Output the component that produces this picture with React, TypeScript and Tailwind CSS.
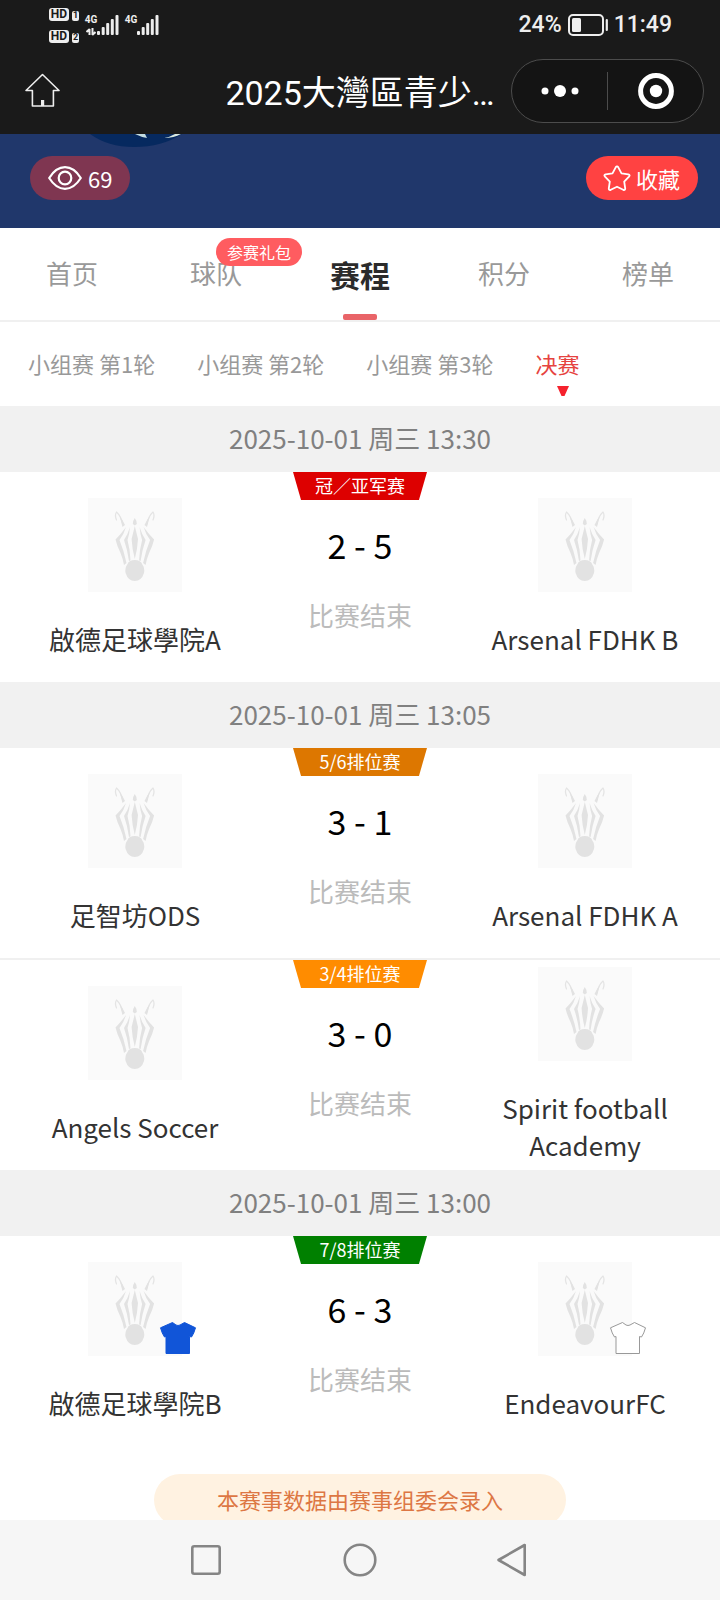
import { useState } from 'react';

type Team = { name: string; shirt?: { fill: string; stroke: string } };
type Match = {
  label: string;
  color: string;
  score: string;
  status: string;
  home: Team;
  away: Team;
};
type Day = { date: string; matches: Match[] };

const DAYS: Day[] = [
  {
    date: '2025-10-01 周三 13:30',
    matches: [
      {
        label: '冠／亚军赛',
        color: 'bg-[#dd0000]',
        score: '2 - 5',
        status: '比赛结束',
        home: { name: '啟德足球學院A' },
        away: { name: 'Arsenal FDHK B' },
      },
    ],
  },
  {
    date: '2025-10-01 周三 13:05',
    matches: [
      {
        label: '5/6排位赛',
        color: 'bg-[#dd7700]',
        score: '3 - 1',
        status: '比赛结束',
        home: { name: '足智坊ODS' },
        away: { name: 'Arsenal FDHK A' },
      },
      {
        label: '3/4排位赛',
        color: 'bg-[#ff8c00]',
        score: '3 - 0',
        status: '比赛结束',
        home: { name: 'Angels Soccer' },
        away: { name: 'Spirit football Academy' },
      },
    ],
  },
  {
    date: '2025-10-01 周三 13:00',
    matches: [
      {
        label: '7/8排位赛',
        color: 'bg-[#008000]',
        score: '6 - 3',
        status: '比赛结束',
        home: { name: '啟德足球學院B', shirt: { fill: '#1155d8', stroke: '#1155d8' } },
        away: { name: 'EndeavourFC', shirt: { fill: '#ffffff', stroke: '#999999' } },
      },
    ],
  },
];

const TABS = ['首页', '球队', '赛程', '积分', '榜单'];
const ROUNDS = ['小组赛 第1轮', '小组赛 第2轮', '小组赛 第3轮', '决赛'];

function HdMark({ sim }: { sim: string }) {
  return (
    <div className="flex items-end gap-[3px]">
      <span className="flex h-[13px] w-5 items-center justify-center rounded-[3px] bg-[#eeeeee] text-[12px] leading-none font-bold text-[#1a1a1a]">
        HD
      </span>
      <span className="flex h-2.5 w-[7px] items-center justify-center rounded-[2px] bg-[#eeeeee] text-[9px] leading-none font-bold text-[#1a1a1a]">
        {sim}
      </span>
    </div>
  );
}

function Signal({ traffic }: { traffic?: boolean }) {
  return (
    <div className="flex items-start">
      <div className="flex w-3 flex-col items-center">
        <span className="text-[10px] leading-[10px] font-bold">4G</span>
        {traffic && (
          <svg viewBox="0 0 10 8" className="mt-[3px] h-2 w-[10px]" fill="none" stroke="currentColor" strokeWidth="2">
            <path d="M3.500 7V1M3.800 1L.5 4M6.500 0v7M6.200 7l3.300-3" />
          </svg>
        )}
      </div>
      <svg viewBox="0 0 22 20" className="h-5 w-[22px]" fill="currentColor">
        <rect x="0" y="16" width="3" height="4" rx="1" />
        <rect x="4.7" y="12" width="3" height="8" rx="1" />
        <rect x="9.2" y="8" width="3" height="12" rx="1" />
        <rect x="13.8" y="4" width="3" height="16" rx="1" />
        <rect x="18.5" y="0" width="3" height="20" rx="1" />
      </svg>
    </div>
  );
}

function StatusBar() {
  return (
    <div className="flex h-12 items-center justify-between pt-0.5 pr-12 pl-[49px] text-[#eeeeee]">
      <div className="flex items-center">
        <div className="mr-1.5 flex flex-col gap-[9px]">
          <HdMark sim="1" />
          <HdMark sim="2" />
        </div>
        <div className="flex gap-1.5">
          <Signal traffic />
          <Signal />
        </div>
      </div>
      <div className="flex items-center gap-1.5 text-[23px] leading-6 font-medium">
        <span>24%</span>
        <svg viewBox="0 0 40 22" className="h-[22px] w-10" fill="none" stroke="currentColor">
          <rect x="1" y="1" width="34" height="20" rx="4" strokeWidth="2" />
          <rect x="4" y="4" width="9" height="14" rx="1.5" fill="currentColor" stroke="none" />
          <path d="M38.8 6v10" strokeWidth="2.2" strokeLinecap="round" />
        </svg>
        <span>11:49</span>
      </div>
    </div>
  );
}

function TitleBar() {
  return (
    <div className="grid h-[86px] grid-cols-[1fr_auto_1fr] items-center px-4">
      <button aria-label="主页" className="ml-2 justify-self-start">
        <svg viewBox="0 0 36 36" className="size-9" fill="none" stroke="#eeeeee" strokeWidth="1.6" strokeLinejoin="round">
          <path d="M18.500 1.500L35 17.500h-5.600v15.500H8.400v-15.500H2z" />
          <path d="M18.600 27v6" strokeWidth="3.200" />
        </svg>
      </button>
      <h1 className="pt-1 text-[34px] leading-10 text-white">2025大灣區青少…</h1>
      <div className="flex h-16 w-[193px] items-center justify-self-end rounded-full border border-[#4c4c4c] bg-[#141414]">
        <button aria-label="更多" className="flex flex-1 justify-center">
          <svg viewBox="0 0 40 14" className="h-3.5 w-10" fill="#fff">
            <circle cx="5" cy="7" r="3.5" />
            <circle cx="20" cy="7" r="6" />
            <circle cx="35" cy="7" r="3.5" />
          </svg>
        </button>
        <span className="h-[38px] w-px bg-[#4c4c4c]" />
        <button aria-label="关闭" className="flex flex-1 justify-center">
          <svg viewBox="0 0 36 36" className="size-9" fill="none">
            <circle cx="18" cy="18" r="15.4" stroke="#fff" strokeWidth="5" />
            <circle cx="18" cy="18" r="6.2" fill="#fff" />
          </svg>
        </button>
      </div>
    </div>
  );
}

function Banner() {
  return (
    <div className="relative flex h-[94px] shrink-0 items-center justify-between bg-[#20376b] pr-[22px] pb-1.5 pl-[30px] text-[22px] leading-[30px] text-white">
      <svg viewBox="0 0 96 14" className="absolute top-0 left-[88px] h-3.5 w-24">
        <path d="M2 0Q20 13 46 13Q74 13 94 0z" fill="#06295f" />
        <path d="M47 0h10l2 4q-6-1-12-4z" fill="#c4dde2" />
        <path d="M76 4Q86 4 93 0H87Q82 3 76 4z" fill="#d9e8e0" />
      </svg>
      <span className="flex h-11 w-[100px] items-center gap-1.5 rounded-full bg-[#7f3651] pb-px pl-[18px]">
        <svg viewBox="0 0 34 24" className="h-6 w-[34px]" fill="none" stroke="currentColor" strokeWidth="2.2">
          <path d="M1.200 12Q8 1.200 17 1.200T32.800 12Q26 22.800 17 22.800T1.200 12z" strokeLinejoin="round" />
          <circle cx="17" cy="12" r="6.300" />
        </svg>
        69
      </span>
      <button className="flex h-11 w-28 items-center gap-[5px] rounded-full bg-[#ff4242] pb-px pl-[17px]">
        <svg viewBox="0 0 28 26" className="h-[26px] w-7" fill="none" stroke="currentColor" strokeWidth="1.8" strokeLinejoin="round">
          <path d="M12.7 2.3q1.3-2 2.6 0l3.2 6 6.8 1.1q2.2.6.7 2.3l-4.8 5 1 6.6q.1 2.3-2 1.5L14 21.7l-6.2 3.1q-2.1.8-2-1.5l1-6.6-4.8-5q-1.5-1.7.7-2.3l6.8-1.1z" />
        </svg>
        收藏
      </button>
    </div>
  );
}

function ZebraLogo() {
  return (
    <svg viewBox="0 0 94 94" className="size-[94px]" fill="none">
      <rect width="94" height="94" fill="#fafafa" />
      <g stroke="#e4e4e4" strokeWidth="1.2" strokeLinecap="round" strokeLinejoin="round">
        <path d="M28.5 22Q26.500 17 28.500 14Q33 18 35 27" />
        <path d="M65 22Q67 17 65 14Q60.500 18 58.500 27" />
      </g>
      <g fill="#e2e2e2">
        <path d="M31.500 18Q35 22 37 27L34.500 29Q33 23 31.500 18zM62 18Q58.500 22 56.500 27L59 29Q60.500 23 62 18z" />
        <path d="M46.800 20Q49 23 48.800 26L46.800 27.500L44.800 26Q44.600 23 46.800 20z" />
        <path d="M38 29Q33 36 27.500 41.500Q29 48 32.500 55Q35 61 36 67L38.500 65Q36 53 31.500 42Q36 36 38 29z" />
        <path d="M55.600 29Q60.600 36 66.100 41.500Q64.600 48 61.100 55Q58.600 61 57.600 67L55.100 65Q57.600 53 62.100 42Q57.600 36 55.600 29z" />
        <path d="M42 29Q40 36 36 42Q39.500 52 41 63L42.500 62.500Q42 51 39.500 42Q41.500 36 42 29z" />
        <path d="M51.600 29Q53.600 36 57.600 42Q54.100 52 52.600 63L51.100 62.500Q51.600 51 54.100 42Q52.100 36 51.600 29z" />
        <path d="M46.800 28Q48.500 35 50 41Q49.500 51 46.800 61Q44.100 51 43.600 41Q45.100 35 46.800 28z" />
        <path d="M46.800 62Q53 62 54.300 66.500Q57 70 56 75Q53.500 83 46.800 83Q40.100 83 37.600 75Q36.600 70 39.300 66.500Q40.600 62 46.800 62z" />
      </g>
    </svg>
  );
}

function TeamView({ team }: { team: Team }) {
  return (
    <div className="flex flex-col items-center justify-center gap-7 px-6">
      <div className="relative">
        <ZebraLogo />
        {team.shirt && (
          <svg
            viewBox="0 0 38 34"
            className="absolute -right-[15px] bottom-px h-[34px] w-[38px]"
            fill={team.shirt.fill}
            stroke={team.shirt.stroke}
            strokeWidth="1"
            strokeLinejoin="round"
          >
            <path d="M13.500 1.500L17 4Q19 5 21 4L25.500 1.500L36.500 6.800Q35 12.500 32.500 16L30.500 15.500V32.500H7V15.500L5.500 16Q3 12.500 1.500 6.800z" />
          </svg>
        )}
      </div>
      <span className="text-center text-[26px] leading-[37px] text-[#333333]">{team.name}</span>
    </div>
  );
}

function MatchRow({ match }: { match: Match }) {
  return (
    <li>
      <div className="grid min-h-[210px] grid-cols-[3fr_2fr_3fr] bg-white">
        <TeamView team={match.home} />
        <div className="flex flex-col items-center">
          <span
            className={`flex h-7 w-[134px] items-center justify-center pb-0.5 text-[18px] leading-none text-white [clip-path:polygon(0_0,100%_0,94%_100%,6%_100%)] ${match.color}`}
          >
            {match.label}
          </span>
          <strong className="mt-5 text-[34px] leading-[50px] font-normal text-black">{match.score}</strong>
          <span className="mt-[25px] text-[26px] leading-10 text-[#bbbbbb]">{match.status}</span>
        </div>
        <TeamView team={match.away} />
      </div>
    </li>
  );
}

export default function App() {
  const [tab, setTab] = useState('赛程');
  const [round, setRound] = useState('决赛');

  return (
    <div className="flex h-screen flex-col bg-white font-['Noto_Sans_CJK_SC',sans-serif]">
      <header className="shrink-0 bg-[#1a1a1a] font-['Roboto','Noto_Sans_CJK_SC',sans-serif]">
        <StatusBar />
        <TitleBar />
      </header>

      <main className="flex min-h-0 flex-1 flex-col overflow-y-auto [scrollbar-width:none]">
        <Banner />

        <nav className="grid h-[94px] shrink-0 grid-cols-5 border-b-2 border-[#f0f0f0]">
          {TABS.map((name) => (
            <button
              key={name}
              onClick={() => setTab(name)}
              className={
                name === tab
                  ? 'relative text-[30px] font-bold text-[#2b2b2b]'
                  : 'relative pb-1 text-[26px] text-[#999999]'
              }
            >
              {name}
              {name === '球队' && (
                <span className="absolute top-2.5 left-1/2 flex h-7 w-[86px] items-center justify-center rounded-full bg-[#ff5c60] text-[16px] text-white">
                  参赛礼包
                </span>
              )}
              {name === tab && (
                <span className="absolute bottom-0 left-1/2 h-1.5 w-[34px] -translate-x-1/2 rounded-[2px] bg-[#e96468]" />
              )}
            </button>
          ))}
        </nav>

        <nav className="flex h-[84px] shrink-0 gap-[42px] px-7">
          {ROUNDS.map((name) => (
            <button
              key={name}
              onClick={() => setRound(name)}
              className={
                name === round
                  ? 'relative pb-0.5 text-[22px] text-[#e64340]'
                  : 'relative pb-0.5 text-[22px] text-[#999999]'
              }
            >
              {name}
              {name === round && (
                <svg viewBox="0 0 12 10" className="absolute bottom-2.5 left-1/2 h-2.5 w-3" fill="#f5222d">
                  <path d="M0 0h12L7.500 10h-3z" />
                </svg>
              )}
            </button>
          ))}
        </nav>

        {DAYS.map((day) => (
          <section key={day.date} className="shrink-0">
            <h2 className="flex h-[66px] items-center justify-center bg-[#f1f1f1] pb-1 text-[26px] text-[#808080]">
              {day.date}
            </h2>
            <ul className="divide-y-2 divide-[#f0f0f0]">
              {day.matches.map((match) => (
                <MatchRow key={match.label} match={match} />
              ))}
            </ul>
          </section>
        ))}

        <p className="mx-auto mt-7 mb-6 flex h-[52px] w-[412px] shrink-0 items-center justify-center rounded-full bg-[#fff2e1] pb-0.5 text-[22px] text-[#dd7744]">
          本赛事数据由赛事组委会录入
        </p>
      </main>

      <footer className="flex h-20 shrink-0 items-center justify-center gap-[120px] bg-[#f6f6f6]">
        <button aria-label="最近任务">
          <svg viewBox="0 0 34 34" className="size-[34px]" fill="none" stroke="#858585" strokeWidth="2.6">
            <rect x="3.300" y="3.300" width="27.400" height="27.400" rx="2" />
          </svg>
        </button>
        <button aria-label="主屏幕">
          <svg viewBox="0 0 34 34" className="size-[34px]" fill="none" stroke="#858585" strokeWidth="2.6">
            <circle cx="17" cy="17" r="15.300" />
          </svg>
        </button>
        <button aria-label="返回">
          <svg viewBox="0 0 34 34" className="size-[34px]" fill="none" stroke="#858585" strokeWidth="2.6" strokeLinejoin="round">
            <path d="M27.700 2v30L1.500 17z" />
          </svg>
        </button>
      </footer>
    </div>
  );
}
